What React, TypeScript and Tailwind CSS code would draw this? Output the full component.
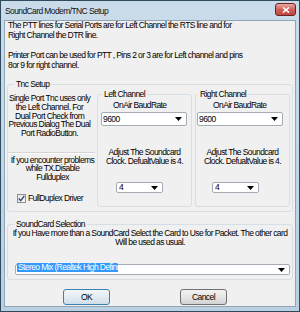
import React from "react";

const FONT = "font-['Liberation_Sans',Arial,sans-serif]";

function Arrow() {
  return (
    <svg width="7" height="4" viewBox="0 0 7 4" className="shrink-0">
      <path d="M0 0 L7 0 L3.5 4 Z" fill="#000" />
    </svg>
  );
}

function Combo({ value, className }: { value: string; className: string }) {
  return (
    <div
      className={`flex items-center bg-white border border-[#a5acb5] rounded-[2px] pl-[1px] pr-[4px] ${className}`}
    >
      <span className="flex-1 whitespace-nowrap overflow-hidden">{value}</span>
      <Arrow />
    </div>
  );
}

function Group({
  label,
  labelClass,
  className,
  children,
}: {
  label: string;
  labelClass: string;
  className: string;
  children: React.ReactNode;
}) {
  return (
    <fieldset className={`border border-[#d5dfe5] rounded-[3px] min-w-0 ${className}`}>
      <legend className={`px-[2px] leading-[9.5px] whitespace-nowrap ${labelClass}`}>{label}</legend>
      {children}
    </fieldset>
  );
}

function Channel({ label, labelClass, onAirPad, comboMl, smallMl }: { label: string; labelClass: string; onAirPad: string; comboMl: string; smallMl: string }) {
  return (
    <Group label={label} labelClass={labelClass} className="w-[95px] h-[117px] flex flex-col">
      <div className={`mt-[1.5px] leading-[9.5px] whitespace-nowrap ${onAirPad}`}>OnAir BaudRate</div>
      <Combo value="9600" className={`mt-[2px] h-[14px] w-[86px] ${comboMl}`} />
      <div className="mt-[22px] leading-[8.5px] text-center whitespace-nowrap">
        Adjust The Soundcard
        <br />
        Clock. DefualtValue is 4.
      </div>
      <Combo value="4" className={`mt-[17px] h-[11px] w-[47px] pl-[2px] pr-[4px] ${smallMl}`} />
    </Group>
  );
}

export default function App() {
  return (
    <div
      className={`w-[300px] h-[312px] flex flex-col border border-[#2e4a5c] bg-gradient-to-b from-[#cadcea] to-[#b9d0e2] text-[8.5px] tracking-[-0.6px] text-black ${FONT}`}
    >
      {/* Title bar */}
      <div className="h-[19px] flex items-center pl-[4px] pr-[3px]">
        <span className="flex-1 whitespace-nowrap text-[#111] leading-[10px]">SoundCard Modem/TNC Setup</span>
        <div className="w-[21px] h-[13px] -mt-[2px] rounded-[3px] border border-[#6b2424] bg-gradient-to-b from-[#e6a9a4] via-[#cf5f58] to-[#c0453e] flex items-center justify-center">
          <svg width="8" height="6" viewBox="0 0 8 6">
            <path d="M1 0.5 L7 5.5 M7 0.5 L1 5.5" stroke="#fff" strokeWidth="1.6" />
          </svg>
        </div>
      </div>

      {/* Client area */}
      <div className="flex-1 mx-[3px] mb-[4px] bg-[#f0f0f0] border border-[#8fa6b9] flex flex-col">
        <div className="pl-[3px] leading-[9.5px] whitespace-nowrap">
          The PTT lines for Serial Ports are for Left Channel the RTS line and for
          <br />
          Right Channel the DTR line.
        </div>
        <div className="mt-[11px] pl-[3px] leading-[9.5px] whitespace-nowrap">
          Printer Port can be used for PTT , Pins 2 or 3 are for Left channel and pins
          <br />
          8or 9 for right channel.
        </div>

        {/* Tnc Setup */}
        <Group label="Tnc Setup" labelClass="ml-[6px]" className="mt-[10px] mx-[2px] pr-[2px] pb-[4px]">
          <div className="flex items-start">
            <div className="w-[89px] flex flex-col">
              <div className="mt-[4.75px] -ml-[3px] w-[89px] text-center leading-[8.7px] whitespace-nowrap">
                Single Port Tnc uses only
                <br />
                the Left Channel. For
                <br />
                Dual Port Check from
                <br />
                Previous Dialog The Dual
                <br />
                Port RadioButton.
              </div>
              <div className="mt-[14.5px] w-[87px] h-[2px] border-t border-[#d5d5d5] border-b border-b-white" />
              <div className="mt-[1.5px] text-center leading-[8.7px] whitespace-nowrap">
                If you encounter problems
                <br />
                while TX.Disable
                <br />
                Fullduplex
              </div>
              <div className="mt-[12px] h-[10px] flex items-center pl-[9px] gap-[2px]">
                <div className="w-[9px] h-[9px] border border-[#8e8f8f] bg-gradient-to-br from-[#e4e4e4] to-[#fafafa] flex items-center justify-center">
                  <svg width="7" height="7" viewBox="0 0 7 7">
                    <path d="M0.8 3.6 L2.7 5.6 L6.3 1" fill="none" stroke="#3d4f7d" strokeWidth="1.4" />
                  </svg>
                </div>
                <span className="whitespace-nowrap leading-[9px]">FullDuplex Driver</span>
              </div>
            </div>
            <Channel label="Left Channel" labelClass="ml-[4px]" onAirPad="pl-[15px]" comboMl="ml-[3px]" smallMl="ml-[18px]" />
            <div className="w-[3px]" />
            <Channel label="Right Channel" labelClass="ml-[2px]" onAirPad="pl-[17px]" comboMl="ml-[1px]" smallMl="ml-[16px]" />
          </div>
        </Group>

        {/* SoundCard Selection */}
        <Group label="SoundCard Selection" labelClass="ml-[6px]" className="mt-[8px] mx-[2px] pb-[4px]">
          <div className="px-[4px] text-center leading-[9px] whitespace-nowrap">
            If you Have more than a SoundCard Select the Card to Use for Packet. The other card
            <br />
            Will be used as usual.
          </div>
          <div className="mt-[17px] ml-[7px] mr-[2px] h-[11px] flex items-center bg-white border border-[#a5acb5] rounded-[2px] pl-[1px] pr-[4px]">
            <div className="flex-1">
              <span className="bg-[#3399ff] text-white whitespace-nowrap leading-[9px] px-[1px] inline-block w-[101px] overflow-hidden">
                Stereo Mix (Realtek High Defini
              </span>
            </div>
            <Arrow />
          </div>
        </Group>

        {/* Buttons */}
        <div className="mt-[9px] flex pl-[58px] gap-[70px]">
          <div className="w-[47px] h-[16px] rounded-[3px] border border-[#3c7fb1] bg-gradient-to-b from-[#f3f7fa] via-[#e3ebf2] to-[#cfdde8] flex items-center justify-center leading-[9px]">
            OK
          </div>
          <div className="w-[47px] h-[16px] rounded-[3px] border border-[#707070] bg-gradient-to-b from-[#f2f2f2] via-[#e6e6e6] to-[#d2d2d2] flex items-center justify-center leading-[9px]">
            Cancel
          </div>
        </div>
      </div>
    </div>
  );
}
